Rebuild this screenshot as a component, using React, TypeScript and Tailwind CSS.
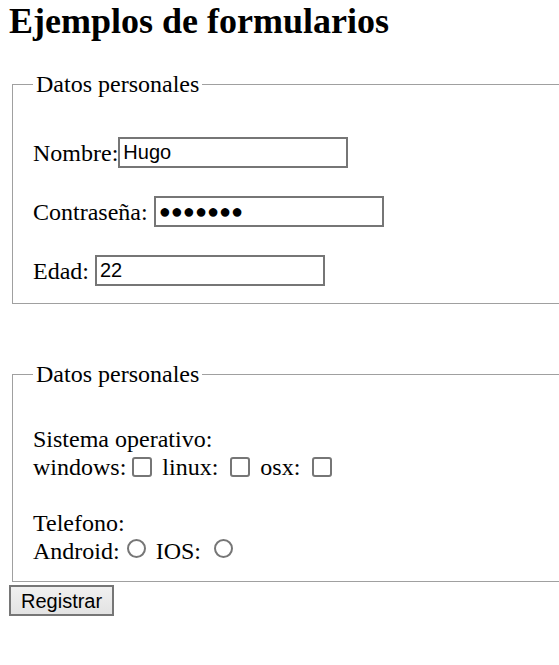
import React from "react";

const serif = "font-['Liberation_Serif','Times_New_Roman',serif]";
const sans = "font-['Liberation_Sans',Arial,sans-serif]";

const fieldsetCls =
  "ml-[3px] w-[620px] border border-[#a0a0a0] pl-[20px] pb-[15px]";
const legendCls = "px-[3px] text-[24px] leading-[28px]";
const inputCls = `${sans} h-[31px] w-[230px] border-2 border-[#767676] bg-white px-[3px] text-[20px] text-black outline-none`;
const checkCls =
  "appearance-none inline-block w-[20px] h-[20px] border-2 border-[#767676] rounded-[3px] bg-white align-[-2px] m-0";
const radioCls =
  "appearance-none inline-block w-[19px] h-[19px] border-2 border-[#767676] rounded-full bg-white align-[1px] m-0";

const App = () => {
  return (
    <div className={`min-h-screen w-full overflow-hidden bg-white text-black ${serif}`}>
      <div className="pl-[9px]">
        {/* Titulo */}
        <h1 className="pt-[1px] text-[36px] font-bold leading-[41px]">
          Ejemplos de formularios
        </h1>

        <form onSubmit={(e) => e.preventDefault()}>
          {/* Primer fieldset */}
          <fieldset className={`${fieldsetCls} mt-[28px]`}>
            <legend className={legendCls}>Datos personales</legend>
            <div className="mt-[37px] flex flex-col gap-[24px] text-[24px]">
              <div className="flex h-[35px] items-center">
                <span>Nombre:</span>
                <input className={inputCls} type="text" defaultValue="Hugo" />
              </div>
              <div className="flex h-[35px] items-center">
                <span>Contraseña:</span>
                <input
                  className={`${inputCls} ml-[6px]`}
                  type="text"
                  defaultValue="●●●●●●●"
                />
              </div>
              <div className="flex h-[35px] items-center">
                <span>Edad:</span>
                <input
                  className={`${inputCls} ml-[6px]`}
                  type="text"
                  defaultValue="22"
                />
              </div>
            </div>
          </fieldset>

          {/* Segundo fieldset */}
          <fieldset className={`${fieldsetCls} mt-[56px] !pb-[16px]`}>
            <legend className={legendCls}>Datos personales</legend>
            <div className="mt-[37px] text-[24px] leading-[28px]">
              <div>Sistema operativo:</div>
              <div className="whitespace-nowrap">
                windows:
                <input type="checkbox" className={`${checkCls} ml-[6px] mr-[4px]`} />{" "}
                linux:{" "}
                <input type="checkbox" className={`${checkCls} ml-[6px] mr-[4px]`} />{" "}
                osx:{" "}
                <input type="checkbox" className={`${checkCls} ml-[6px] mr-[4px]`} />
              </div>
              <div className="h-[28px]" />
              <div>Telefono:</div>
              <div className="whitespace-nowrap">
                Android:
                <input type="radio" name="tel" className={`${radioCls} ml-[7px] mr-[4px]`} />{" "}
                IOS:{" "}
                <input type="radio" name="tel" className={`${radioCls} ml-[7px] mr-[4px]`} />
              </div>
            </div>
          </fieldset>

          <button
            type="submit"
            className={`${sans} mt-[3px] h-[31px] border-2 border-[#767676] bg-gradient-to-b from-[#f0f0f0] to-[#e3e3e3] px-[10px] text-[20px] leading-none text-black`}
          >
            Registrar
          </button>
        </form>
      </div>
    </div>
  );
};

export default App;
